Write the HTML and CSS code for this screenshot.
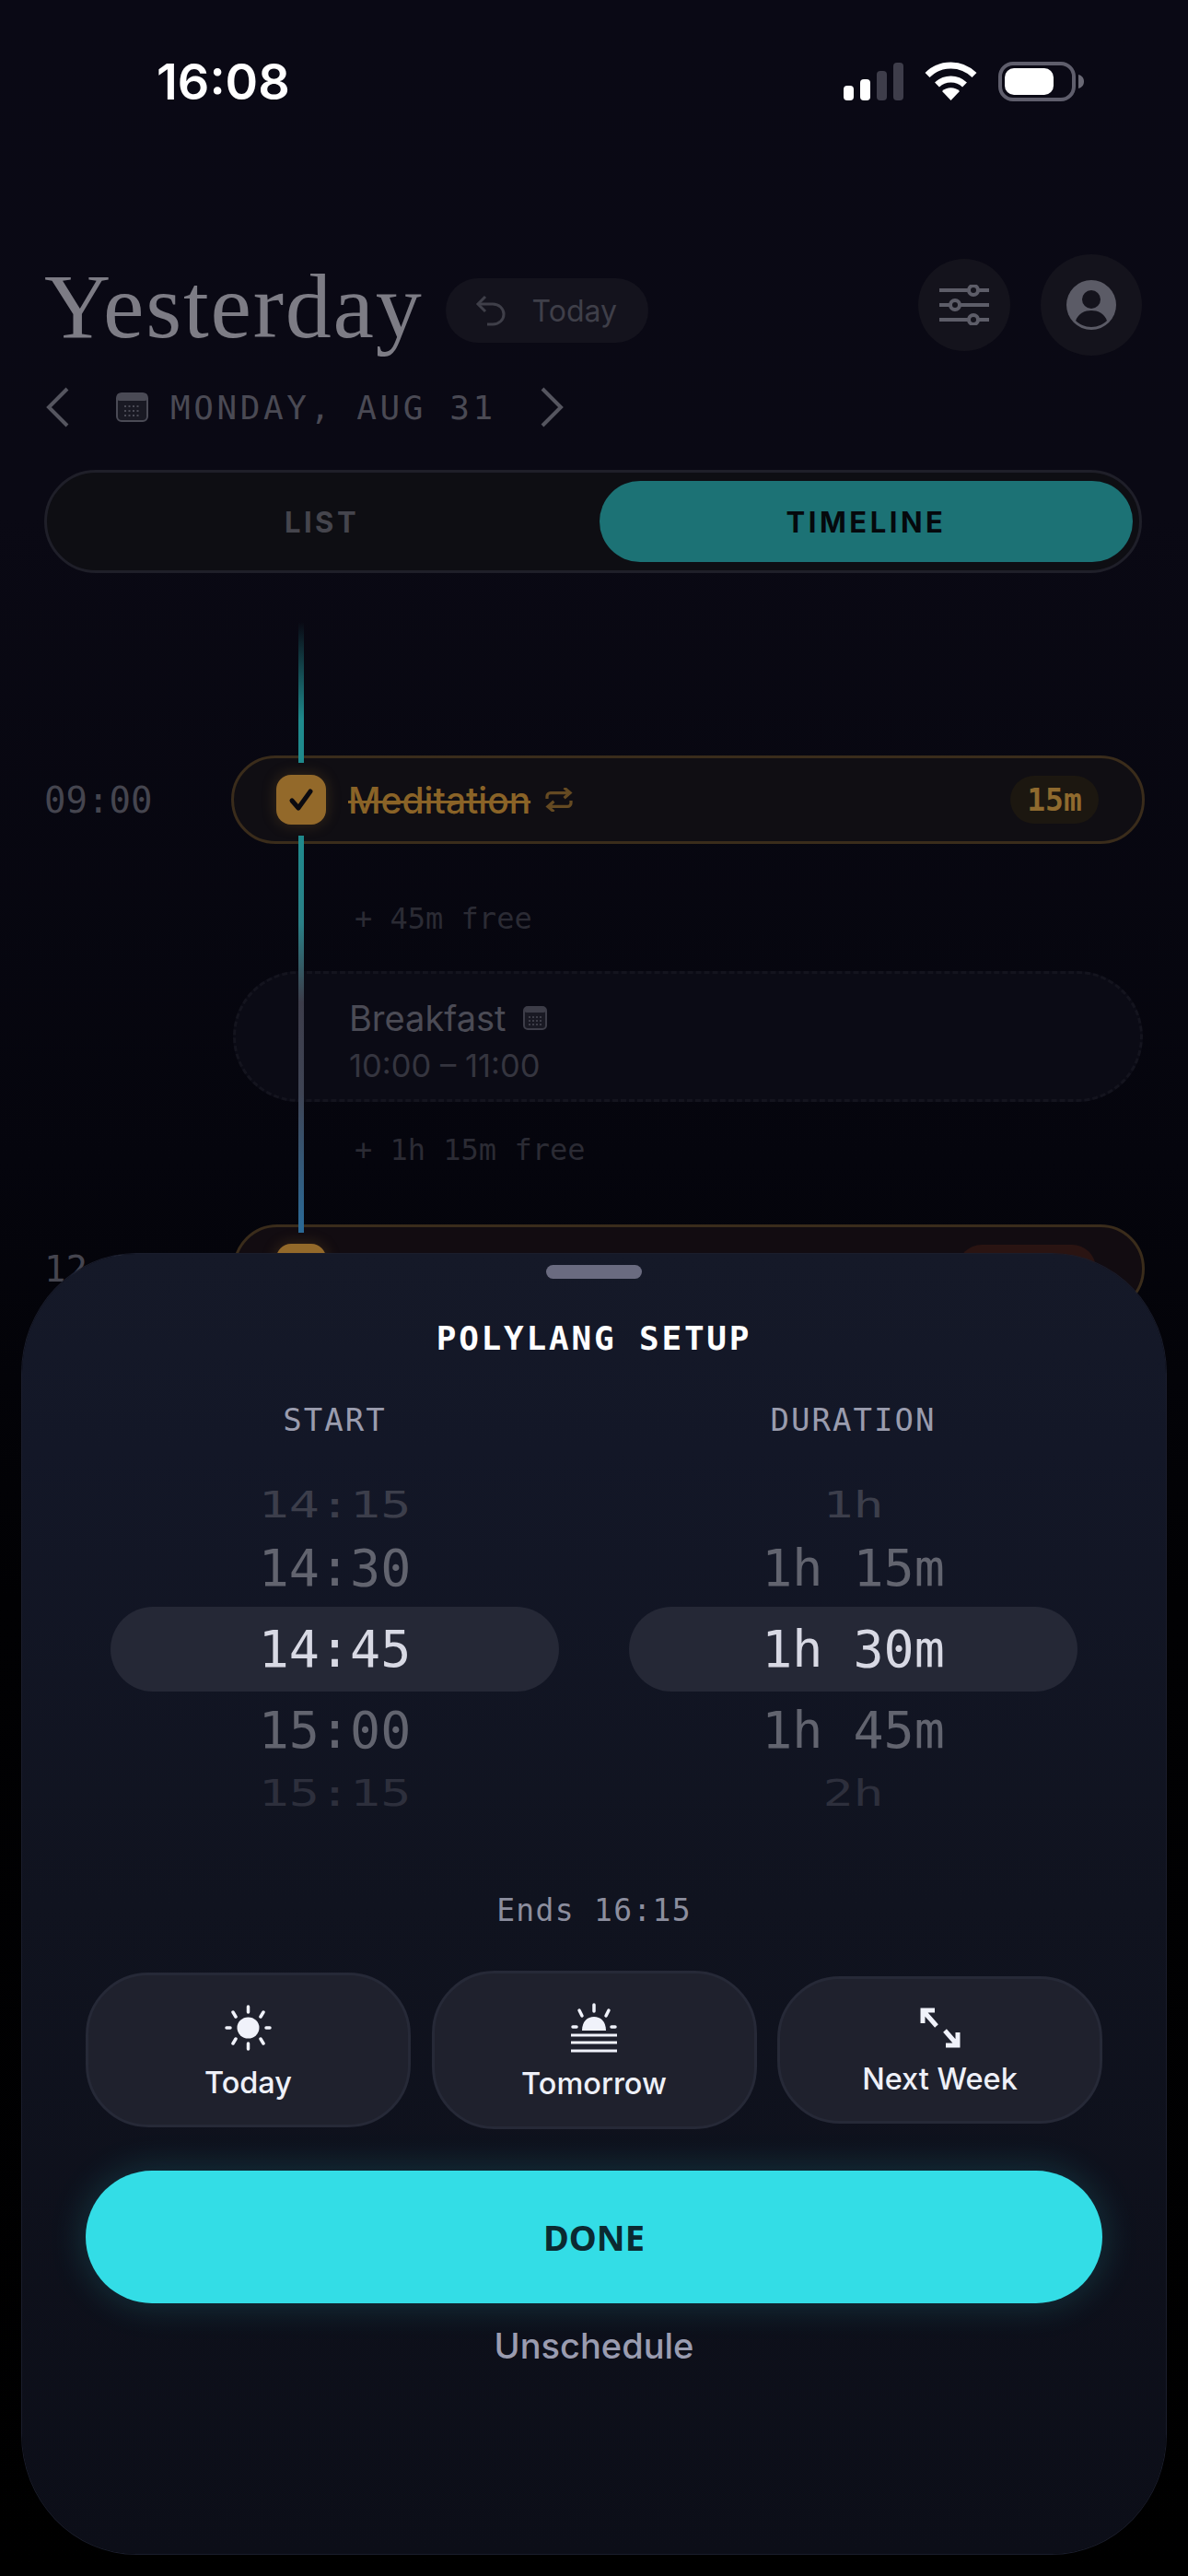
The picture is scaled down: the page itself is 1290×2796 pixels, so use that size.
FILE: index.html
```html
<!DOCTYPE html>
<html lang="en">
<head>
    <meta charset="UTF-8">
    <meta name="viewport" content="width=device-width, initial-scale=1.0">
    <title>Polylang Setup</title>
    <link rel="stylesheet" href="styles.css">
</head>
<body>
    <div class="screen">
        <div class="status-bar">
            <span class="clock">16:08</span>
            <div class="status-icons">
                <svg width="65" height="41" viewBox="0 0 65 41">
                    <rect x="0" y="25" width="11" height="16" rx="4" fill="#fff"/>
                    <rect x="18" y="18" width="11" height="23" rx="4" fill="#fff"/>
                    <rect x="36" y="9" width="11" height="32" rx="4" fill="#3e3d4a"/>
                    <rect x="54" y="0" width="11" height="41" rx="4" fill="#3e3d4a"/>
                </svg>
                <svg width="57" height="42" viewBox="0 0 57 42">
                    <path d="M3 14.5a36 36 0 0 1 51 0" fill="none" stroke="#fff" stroke-width="7"/>
                    <path d="M13.5 25a21.500 21.500 0 0 1 30 0" fill="none" stroke="#fff" stroke-width="7"/>
                    <path d="M19 32a14 14 0 0 1 19 0l-9.500 10z" fill="#fff"/>
                </svg>
                <svg width="93" height="43" viewBox="0 0 93 43">
                    <rect x="2" y="2" width="80" height="39" rx="14" fill="none" stroke="#5f5e6c" stroke-width="4"/>
                    <rect x="7" y="7" width="53" height="29" rx="10" fill="#fff"/>
                    <path d="M87 14c4 1 6 4 6 7.500s-2 6.500-6 7.500z" fill="#6a6975"/>
                </svg>
            </div>
        </div>

        <header class="header">
            <h1 class="title">Yesterday</h1>
            <div class="today-pill">
                <svg width="34" height="34" viewBox="0 0 34 34" fill="none" stroke="#3f3f49" stroke-width="3">
                    <path d="M11 2 3 10l8 8"/>
                    <path d="M3 10h16c7 0 12 5 12 11s-5 11-12 11h-6"/>
                </svg>
                <span>Today</span>
            </div>
            <div class="round-btn filter-btn">
                <svg width="54" height="44" viewBox="0 0 54 44" fill="none" stroke="#5d5d68" stroke-width="4">
                    <path d="M0 6h32m10 0h12M0 22h12m10 0h32M0 38h32m10 0h12"/>
                    <circle cx="37" cy="6" r="5"/>
                    <circle cx="17" cy="22" r="5"/>
                    <circle cx="37" cy="38" r="5"/>
                </svg>
            </div>
            <div class="round-btn profile-btn">
                <svg width="54" height="54" viewBox="0 0 54 54">
                    <circle cx="27" cy="27" r="27" fill="#5b5b66"/>
                    <circle cx="27" cy="21" r="10" fill="#14131c"/>
                    <path d="M10 44c3-8 10-11 17-11s14 3 17 11c-4 4-10 7-17 7s-13-3-17-7z" fill="#14131c"/>
                </svg>
            </div>
        </header>

        <div class="date-row">
            <svg width="25" height="44" viewBox="0 0 25 44" fill="none" stroke="#55555f" stroke-width="4">
                <path d="M23 2 3 22l20 20"/>
            </svg>
            <svg class="date-cal" width="35" height="32" viewBox="0 0 35 32">
                <rect x="1" y="1" width="33" height="30" rx="5" fill="#191923" stroke="#4a4a55" stroke-width="2"/>
                <rect x="1" y="1" width="33" height="8" rx="3" fill="#4a4a55"/>
                <path d="M9 15h17M9 20h17M9 25h17" stroke="#4a4a55" stroke-width="2" stroke-dasharray="2 2.500"/>
            </svg>
            <span class="date-text">MONDAY, AUG 31</span>
            <svg width="25" height="44" viewBox="0 0 25 44" fill="none" stroke="#55555f" stroke-width="4">
                <path d="m2 2 20 20L2 42"/>
            </svg>
        </div>

        <div class="toggle">
            <div class="toggle-item">LIST</div>
            <div class="toggle-item active">TIMELINE</div>
        </div>

        <main class="timeline">
            <div class="line line-top"></div>
            <div class="line line-main"></div>

            <div class="row">
                <span class="time">09:00</span>
                <div class="card card-done">
                    <span class="check">
                        <svg width="28" height="28" viewBox="0 0 28 28" fill="none" stroke="#0b0a10" stroke-width="5" stroke-linecap="round" stroke-linejoin="round">
                            <path d="m4 15 7 8L24 5"/>
                        </svg>
                    </span>
                    <span class="card-name">Meditation</span>
                    <svg class="repeat" width="30" height="26" viewBox="0 0 30 28" fill="none" stroke="#654a22" stroke-width="3.500">
                        <path d="M1 13V10c0-2 2-4 4-4h22M21 0l7 6-7 6M29 15v3c0 2-2 4-4 4H3M9 16l-7 6 7 6"/>
                    </svg>
                    <span class="badge">15m</span>
                </div>
            </div>

            <div class="free free-first">+ 45m free</div>

            <div class="row">
                <span class="time"></span>
                <div class="card card-event">
                    <div class="event-title">
                        <span>Breakfast</span>
                        <svg width="26" height="26" viewBox="0 0 26 26">
                            <rect x="1" y="1" width="24" height="24" rx="4" fill="#191923" stroke="#3d3d48" stroke-width="2"/>
                            <rect x="1" y="1" width="24" height="6" rx="3" fill="#3d3d48"/>
                            <path d="M6 12h14M6 16h14M6 20h14" stroke="#3d3d48" stroke-width="2" stroke-dasharray="2 2"/>
                        </svg>
                    </div>
                    <div class="event-time">10:00 – 11:00</div>
                </div>
            </div>

            <div class="free free-second">+ 1h 15m free</div>

            <div class="row">
                <span class="time">12:15</span>
                <div class="card card-next">
                    <span class="check"></span>
                    <span class="badge badge-red"></span>
                </div>
            </div>
        </main>

        <section class="sheet">
            <div class="handle"></div>
            <h2 class="sheet-title">POLYLANG SETUP</h2>

            <div class="pickers">
                <div class="picker">
                    <div class="picker-label">START</div>
                    <div class="wheel">
                        <div class="wheel-item far"><span>14:15</span></div>
                        <div class="wheel-item near">14:30</div>
                        <div class="wheel-item selected">14:45</div>
                        <div class="wheel-item near">15:00</div>
                        <div class="wheel-item far last"><span>15:15</span></div>
                    </div>
                </div>
                <div class="picker">
                    <div class="picker-label">DURATION</div>
                    <div class="wheel">
                        <div class="wheel-item far"><span>1h</span></div>
                        <div class="wheel-item near">1h 15m</div>
                        <div class="wheel-item selected">1h 30m</div>
                        <div class="wheel-item near">1h 45m</div>
                        <div class="wheel-item far last"><span>2h</span></div>
                    </div>
                </div>
            </div>

            <div class="ends">Ends 16:15</div>

            <div class="quick-row">
                <div class="quick quick-today">
                    <svg width="51" height="50" viewBox="0 0 51 50" fill="#f0f2fa" stroke="#f0f2fa" stroke-width="3.500" stroke-linecap="round">
                        <ellipse cx="25.500" cy="25" rx="12" ry="11.500" stroke="none"/>
                        <path d="M25.500 2v6M25.500 42v6M2 25h4M45 25h4M9 8l3 5M39 13l3-5M9 42l3-5M42 42l-3-5"/>
                    </svg>
                    <span>Today</span>
                </div>
                <div class="quick quick-tomorrow">
                    <svg width="54" height="54" viewBox="0 0 54 54" fill="#f0f2fa" stroke="#f0f2fa" stroke-width="3.500">
                        <path d="M27 2v7M4 26h4M46 26h4M11 8l3 6M43 8l-3 6" stroke-linecap="round"/>
                        <path d="M14 30c0-10 6-15 13-15s13 5 13 15z" stroke="none"/>
                        <path d="M2 35h50M2 43h50M2 52h50" stroke-width="3"/>
                    </svg>
                    <span>Tomorrow</span>
                </div>
                <div class="quick quick-week">
                    <svg width="44" height="44" viewBox="0 0 44 44" fill="none" stroke="#f0f2fa" stroke-width="5">
                        <path d="M3 17V3h13M3 3l15 17M41 27v14H28M41 41 27 25"/>
                    </svg>
                    <span>Next Week</span>
                </div>
            </div>

            <div class="done-btn">DONE</div>
            <div class="unschedule">Unschedule</div>
        </section>
    </div>
</body>
</html>
```

FILE: styles.css
```css
body {
    margin: 0;
    background-color: #000;
    font-family: Inter, "Noto Sans", sans-serif;
}
.screen {
    position: relative;
    width: 1290px;
    height: 2796px;
    overflow: hidden;
    background: linear-gradient(180deg, #0a0915 0%, #0a0914 20%, #05050d 45%, #010103 62%, #000 100%);
}

/* status bar */
.status-bar {
    display: flex;
    align-items: center;
    justify-content: space-between;
    height: 176px;
    padding: 0 113px 0 170px;
}
.clock {
    color: #fff;
    font-size: 54px;
    font-weight: 600;
}
.status-icons {
    display: flex;
    align-items: center;
    gap: 23px;
}

/* header */
.header {
    display: flex;
    align-items: center;
    height: 110px;
    margin-top: 100px;
    padding: 0 50px 0 48px;
}
.title {
    margin: 4px 0 0;
    color: #7d7c85;
    font-family: "Liberation Serif", serif;
    font-size: 100px;
    font-weight: 400;
    line-height: 110px;
    letter-spacing: 1.8px;
}
.today-pill {
    display: flex;
    align-items: center;
    gap: 28px;
    width: 220px;
    height: 70px;
    box-sizing: border-box;
    margin-left: 24px;
    margin-top: 12px;
    padding-left: 32px;
    border-radius: 35px;
    background-color: #14131d;
    color: #3f3f49;
    font-size: 32px;
}
.round-btn {
    display: flex;
    align-items: center;
    justify-content: center;
    border-radius: 50%;
    background-color: #14131c;
}
.filter-btn {
    width: 100px;
    height: 100px;
    margin-left: auto;
}
.profile-btn {
    width: 110px;
    height: 110px;
    margin-left: 33px;
}

/* date row */
.date-row {
    display: flex;
    align-items: center;
    height: 44px;
    margin-top: 34px;
    padding-left: 50px;
}
.date-cal {
    margin-left: 51px;
}
.date-text {
    margin: 0 48px 0 24px;
    color: #4a4a54;
    font-family: "DejaVu Sans Mono", monospace;
    font-size: 36px;
    letter-spacing: 3.6px;
    white-space: nowrap;
}

/* list / timeline switch */
.toggle {
    display: flex;
    justify-content: space-between;
    height: 112px;
    box-sizing: border-box;
    margin: 46px 50px 0 48px;
    padding: 9px 7px 9px 9px;
    border: 3px solid #1f1f29;
    border-radius: 56px;
    background-color: #0e0e13;
}
.toggle-item {
    display: flex;
    align-items: center;
    justify-content: center;
    width: 579px;
    border-radius: 44px;
    color: #45454d;
    font-size: 31px;
    font-weight: 700;
    letter-spacing: 3.5px;
}
.toggle-item.active {
    background-color: #1c7275;
    color: #05080c;
}

/* timeline */
.timeline {
    position: relative;
    padding-top: 198px;
}
.line {
    position: absolute;
    left: 324px;
    width: 6px;
}
.line-top {
    top: 53px;
    height: 153px;
    background: linear-gradient(180deg, rgba(31, 138, 141, 0), #1f8a8d 70%);
}
.line-main {
    top: 285px;
    height: 431px;
    background: linear-gradient(180deg, #1f8a8d 0%, #2a7f86 22%, #3d3d4a 42%, #3f4454 65%, #2a6a98 100%);
}
.row {
    display: flex;
    align-items: center;
    padding: 0 47px 0 48px;
}
.time {
    width: 203px;
    flex-shrink: 0;
    color: #45454f;
    font-family: "DejaVu Sans Mono", monospace;
    font-size: 39px;
}
.card {
    flex: 1;
    box-sizing: border-box;
    border-radius: 48px;
}
.card-done {
    display: flex;
    align-items: center;
    height: 96px;
    padding: 0 47px 0 46px;
    border: 3px solid #3a2c1b;
    background-color: #100e13;
}
.check {
    position: relative;
    display: flex;
    align-items: center;
    justify-content: center;
    flex-shrink: 0;
    width: 54px;
    height: 54px;
    border-radius: 16px;
    background-color: #93692a;
    box-shadow: 0 0 16px rgba(147, 105, 42, 0.3);
}
.card-name {
    margin-left: 24px;
    color: #8a6327;
    font-size: 39px;
    font-weight: 500;
    text-decoration: line-through;
    text-decoration-thickness: 3px;
}
.repeat {
    margin-left: 16px;
}
.badge {
    display: flex;
    align-items: center;
    justify-content: center;
    width: 96px;
    height: 52px;
    margin-left: auto;
    border-radius: 26px;
    background-color: #1c1710;
    color: #8f6a2e;
    font-family: "DejaVu Sans Mono", monospace;
    font-size: 33px;
    font-weight: 700;
}
.free {
    padding-left: 385px;
    color: #2b2b34;
    font-family: "DejaVu Sans Mono", monospace;
    font-size: 32px;
}
.free-first {
    height: 138px;
    box-sizing: border-box;
    padding-top: 62px;
}
.free-second {
    height: 133px;
    box-sizing: border-box;
    padding-top: 33px;
}
.card-event {
    height: 142px;
    margin-left: 2px;
    margin-right: 2px;
    padding: 25px 0 0 123px;
    border: 3px dashed #14141e;
    border-radius: 71px;
    background-color: #0b0b15;
}
.event-title {
    display: flex;
    align-items: center;
    gap: 18px;
    color: #4b4b55;
    font-size: 38px;
}
.event-time {
    margin-top: 8px;
    color: #35353f;
    font-size: 34.5px;
}
.card-next {
    display: flex;
    align-items: center;
    height: 96px;
    margin-left: 2px;
    padding: 0 50px 0 44px;
    border: 3px solid #3a2c1b;
    background-color: #120c11;
}
.badge-red {
    width: 150px;
    background-color: #2a1412;
}

/* bottom sheet */
.sheet {
    position: absolute;
    left: 24px;
    top: 1361px;
    width: 1242px;
    height: 1411px;
    box-sizing: border-box;
    padding: 12px 69px 0;
    border-radius: 124px / 130px;
    background: linear-gradient(180deg, #151928 0%, #131727 15%, #10131f 50%, #0c0e18 100%);
    box-shadow: 0 0 0 1px #1a1d2c;
}
.handle {
    width: 104px;
    height: 15px;
    margin: 0 auto;
    border-radius: 8px;
    background-color: #6a6b80;
}
.sheet-title {
    margin: 43px 0 0;
    color: #fff;
    font-family: "DejaVu Sans Mono", monospace;
    font-size: 36px;
    font-weight: 700;
    line-height: 44px;
    letter-spacing: 2.8px;
    text-align: center;
}
.pickers {
    display: flex;
    gap: 76px;
    margin-top: 46px;
    padding: 0 27px;
}
.picker {
    flex: 1;
}
.picker-label {
    color: #9a9cae;
    font-family: "DejaVu Sans Mono", monospace;
    font-size: 34px;
    line-height: 40px;
    letter-spacing: 2px;
    text-align: center;
}
.wheel {
    margin-top: 44px;
    font-family: "DejaVu Sans Mono", monospace;
    font-size: 55px;
    text-align: center;
}
.wheel-item {
    display: flex;
    align-items: center;
    justify-content: center;
    white-space: pre;
}
.wheel-item.far {
    height: 55px;
    color: #3c3e4b;
}
.wheel-item.far span {
    transform: scaleY(0.72);
}
.wheel-item.far.last {
    height: 52px;
    color: #2d2f3c;
}
.wheel-item.near {
    height: 84px;
    color: #62646f;
}
.wheel-item.selected {
    height: 92px;
    border-radius: 46px;
    background-color: #252836;
    color: #d8d9e4;
}
.ends {
    margin-top: 82px;
    color: #8c8e9e;
    font-family: "DejaVu Sans Mono", monospace;
    font-size: 33px;
    line-height: 40px;
    letter-spacing: 1.3px;
    text-align: center;
}
.quick-row {
    display: flex;
    align-items: center;
    justify-content: space-between;
    height: 172px;
    margin-top: 45px;
}
.quick {
    display: flex;
    flex-direction: column;
    align-items: center;
    justify-content: center;
    width: 353px;
    box-sizing: border-box;
    padding-top: 6px;
    border: 3px solid #262937;
    border-radius: 68px;
    background-color: #1f212d;
    color: #eef0f8;
    font-size: 32.5px;
    font-weight: 500;
}
.quick span {
    line-height: 40px;
}
.quick-today {
    height: 168px;
    gap: 15px;
}
.quick-tomorrow {
    height: 172px;
    gap: 14px;
}
.quick-week {
    height: 160px;
    gap: 14px;
}
.done-btn {
    display: flex;
    align-items: center;
    justify-content: center;
    height: 144px;
    margin-top: 45px;
    border-radius: 72px;
    background-color: #33dde6;
    box-shadow: 0 0 40px rgba(51, 221, 230, 0.2);
    color: #0b2a31;
    font-family: "Noto Sans", sans-serif;
    font-size: 38px;
    font-weight: 700;
}
.unschedule {
    margin-top: 24px;
    color: #9a9cb0;
    font-size: 38px;
    font-weight: 500;
    line-height: 44px;
    text-align: center;
}
```
